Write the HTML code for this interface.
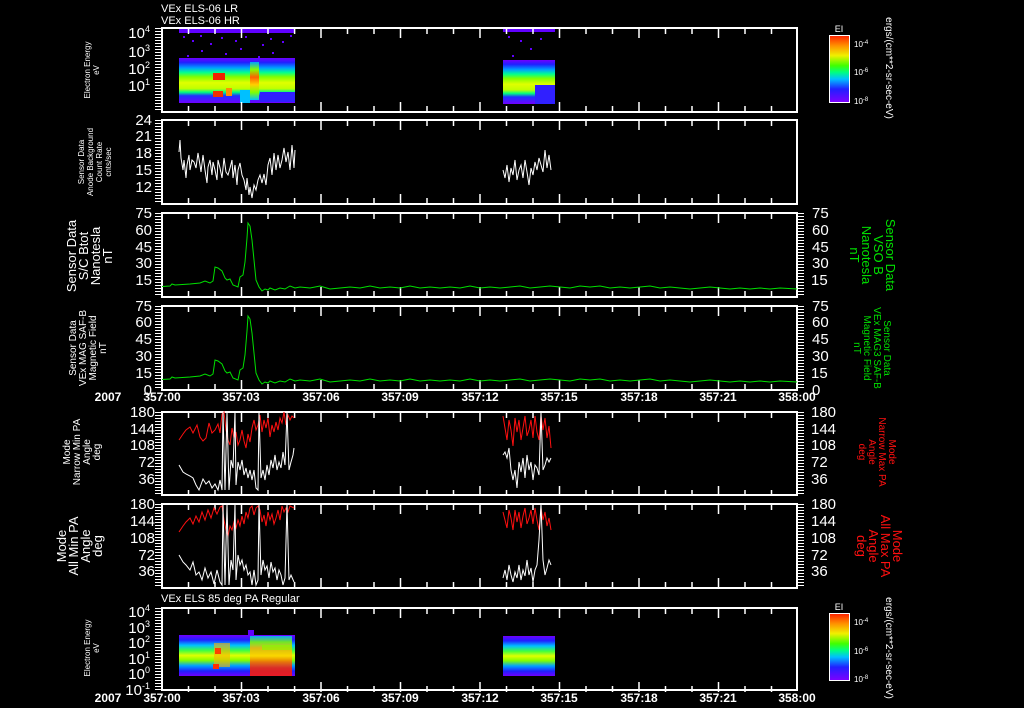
<!DOCTYPE html>
<html><head><meta charset="utf-8"><style>
html,body{margin:0;padding:0;background:#000;width:1024px;height:708px;overflow:hidden}
svg{display:block}
text{font-family:"Liberation Sans",sans-serif;fill:#fff}
</style></head><body>
<svg width="1024" height="708" viewBox="0 0 1024 708" xmlns="http://www.w3.org/2000/svg">
<defs>
<linearGradient id="cb" x1="0" y1="0" x2="0" y2="1">
<stop offset="0" stop-color="#ff2000"/><stop offset="0.15" stop-color="#ff9000"/><stop offset="0.3" stop-color="#f0f000"/><stop offset="0.45" stop-color="#40ff00"/><stop offset="0.55" stop-color="#00ff80"/><stop offset="0.65" stop-color="#00c0ff"/><stop offset="0.8" stop-color="#2020ff"/><stop offset="1" stop-color="#8000ff"/>
</linearGradient>
<linearGradient id="s1" x1="0" y1="0" x2="0" y2="1">
<stop offset="0" stop-color="#7000ff"/><stop offset="0.1" stop-color="#2020ff"/><stop offset="0.22" stop-color="#00a0ff"/><stop offset="0.32" stop-color="#00ff90"/><stop offset="0.42" stop-color="#80ff00"/><stop offset="0.55" stop-color="#e0ff00"/><stop offset="0.68" stop-color="#c0ff00"/><stop offset="0.76" stop-color="#00ff80"/><stop offset="0.84" stop-color="#2030ff"/><stop offset="1" stop-color="#7000ff"/>
</linearGradient>
<linearGradient id="s7" x1="0" y1="0" x2="0" y2="1">
<stop offset="0" stop-color="#7000ff"/><stop offset="0.12" stop-color="#2020ff"/><stop offset="0.25" stop-color="#00c0ff"/><stop offset="0.38" stop-color="#40ff40"/><stop offset="0.5" stop-color="#e0ff00"/><stop offset="0.62" stop-color="#80ff00"/><stop offset="0.75" stop-color="#00a0ff"/><stop offset="0.88" stop-color="#2020ff"/><stop offset="1" stop-color="#7000ff"/>
</linearGradient>
<linearGradient id="s7b" x1="0" y1="0" x2="0" y2="1">
<stop offset="0" stop-color="#00c0ff"/><stop offset="0.15" stop-color="#80ff00"/><stop offset="0.3" stop-color="#ffb000"/><stop offset="0.5" stop-color="#ffd000"/><stop offset="0.65" stop-color="#ff6000"/><stop offset="0.8" stop-color="#ff2000"/><stop offset="1" stop-color="#ff2000"/>
</linearGradient>
<linearGradient id="sp" x1="0" y1="0" x2="0" y2="1">
<stop offset="0" stop-color="#00a0ff"/><stop offset="0.2" stop-color="#80ff00"/><stop offset="0.4" stop-color="#ff6000"/><stop offset="0.6" stop-color="#ffd000"/><stop offset="0.8" stop-color="#80ff00"/><stop offset="1" stop-color="#00c0ff"/>
</linearGradient>
</defs>

<text x="161" y="12" font-size="11">VEx ELS-06 LR</text>
<text x="161" y="24" font-size="11">VEx ELS-06 HR</text>
<text x="161" y="602" font-size="11">VEx ELS 85 deg PA Regular</text>

<!-- spectrogram panel 1 -->
<rect x="179" y="29" width="116" height="4" fill="#6000ff"/>
<g fill="#6000ff">
<rect x="183" y="36" width="2" height="2"/><rect x="192" y="40" width="2" height="2"/><rect x="200" y="35" width="2" height="2"/><rect x="210" y="43" width="2" height="2"/><rect x="221" y="37" width="2" height="2"/><rect x="235" y="40" width="2" height="2"/><rect x="245" y="36" width="2" height="2"/><rect x="262" y="44" width="2" height="2"/><rect x="270" y="38" width="2" height="2"/><rect x="282" y="41" width="2" height="2"/><rect x="290" y="35" width="2" height="2"/><rect x="201" y="50" width="2" height="2"/><rect x="240" y="48" width="2" height="2"/><rect x="272" y="52" width="2" height="2"/><rect x="187" y="55" width="2" height="2"/><rect x="225" y="53" width="2" height="2"/><rect x="258" y="56" width="2" height="2"/>
<rect x="503" y="29" width="52" height="3"/><rect x="508" y="36" width="2" height="2"/><rect x="520" y="40" width="2" height="2"/><rect x="530" y="48" width="2" height="2"/><rect x="512" y="55" width="2" height="2"/><rect x="540" y="38" width="2" height="2"/>
</g>
<rect x="179" y="58" width="116" height="45" fill="url(#s1)"/>
<rect x="213" y="73" width="12" height="7" fill="#f02000"/>
<rect x="213" y="91" width="10" height="6" fill="#f03000"/>
<rect x="226" y="88" width="6" height="8" fill="#ff9000"/>
<rect x="250" y="62" width="9" height="38" fill="url(#sp)"/>
<rect x="240" y="90" width="10" height="13" fill="#00c0ff"/>
<rect x="260" y="92" width="35" height="10" fill="#3020ff"/>
<rect x="503" y="60" width="52" height="44" fill="url(#s1)"/>
<rect x="535" y="85" width="20" height="19" fill="#3020ff"/>

<!-- spectrogram panel 7 -->
<rect x="179" y="635" width="116" height="41" fill="url(#s7)"/>
<rect x="214" y="643" width="16" height="24" fill="#ffb000" opacity="0.6"/>
<rect x="215" y="648" width="6" height="6" fill="#ff4000"/>
<rect x="213" y="664" width="6" height="5" fill="#ff3000"/>
<rect x="250" y="636" width="42" height="40" fill="url(#s7b)" opacity="0.85"/>
<rect x="262" y="645" width="30" height="5" fill="#80ff00" opacity="0.6"/>
<rect x="248" y="630" width="6" height="5" fill="#6000ff"/>
<rect x="503" y="636" width="52" height="40" fill="url(#s7)"/>

<g fill="none" stroke="#fff" stroke-width="2">
<rect x="162" y="28" width="635" height="84"/>
<rect x="162" y="120" width="635" height="84"/>
<rect x="162" y="213" width="635" height="84"/>
<rect x="162" y="306" width="635" height="84"/>
<rect x="162" y="412" width="635" height="83"/>
<rect x="162" y="504" width="635" height="84"/>
<rect x="162" y="608" width="635" height="82"/>
</g>

<g stroke="#fff" stroke-width="6" stroke-dasharray="1 2">
<line x1="158" y1="28" x2="158" y2="112"/>
<line x1="158" y1="120" x2="158" y2="204"/>
<line x1="158" y1="213" x2="158" y2="297"/>
<line x1="158" y1="306" x2="158" y2="390"/>
<line x1="158" y1="412" x2="158" y2="495"/>
<line x1="158" y1="504" x2="158" y2="588"/>
<line x1="158" y1="608" x2="158" y2="690"/>
<line x1="801" y1="213" x2="801" y2="297"/>
<line x1="801" y1="306" x2="801" y2="390"/>
<line x1="801" y1="412" x2="801" y2="495"/>
<line x1="801" y1="504" x2="801" y2="588"/>
</g>

<g stroke="#fff" stroke-width="1.5" id="tk">
<path d="M188.5 28v6M215 28v6M241.5 28v10M268 28v6M294.6 28v6M321 28v10M347.5 28v6M374 28v6M400.5 28v10M427 28v6M453.5 28v6M480 28v10M506.5 28v6M533 28v6M559.5 28v10M586 28v6M612.5 28v6M639 28v10M665.5 28v6M692 28v6M718.5 28v10M745 28v6M771.5 28v6
M188.5 112v-6M215 112v-6M241.5 112v-10M268 112v-6M294.6 112v-6M321 112v-10M347.5 112v-6M374 112v-6M400.5 112v-10M427 112v-6M453.5 112v-6M480 112v-10M506.5 112v-6M533 112v-6M559.5 112v-10M586 112v-6M612.5 112v-6M639 112v-10M665.5 112v-6M692 112v-6M718.5 112v-10M745 112v-6M771.5 112v-6"/>
</g>
<use href="#tk" y="92"/><use href="#tk" y="185"/><use href="#tk" y="278"/><use href="#tk" y="384"/><use href="#tk" y="476"/><use href="#tk" y="580"/>

<g font-size="15" text-anchor="end">
<text x="150" y="38">10<tspan font-size="9" dy="-6">4</tspan></text>
<text x="150" y="57">10<tspan font-size="9" dy="-6">3</tspan></text>
<text x="150" y="74">10<tspan font-size="9" dy="-6">2</tspan></text>
<text x="150" y="91">10<tspan font-size="9" dy="-6">1</tspan></text>
<text x="152" y="125">24</text><text x="152" y="141">21</text><text x="152" y="158">18</text><text x="152" y="175">15</text><text x="152" y="192">12</text>
<text x="152" y="218">75</text><text x="152" y="235">60</text><text x="152" y="252">45</text><text x="152" y="268">30</text><text x="152" y="285">15</text>
<text x="152" y="311">75</text><text x="152" y="327">60</text><text x="152" y="344">45</text><text x="152" y="361">30</text><text x="152" y="378">15</text><text x="152" y="395">0</text>
<text x="155" y="417">180</text><text x="155" y="434">144</text><text x="155" y="450">108</text><text x="155" y="467">72</text><text x="155" y="484">36</text>
<text x="155" y="509">180</text><text x="155" y="526">144</text><text x="155" y="543">108</text><text x="155" y="560">72</text><text x="155" y="576">36</text>
<text x="150" y="617">10<tspan font-size="9" dy="-6">4</tspan></text>
<text x="150" y="633">10<tspan font-size="9" dy="-6">3</tspan></text>
<text x="150" y="648">10<tspan font-size="9" dy="-6">2</tspan></text>
<text x="150" y="664">10<tspan font-size="9" dy="-6">1</tspan></text>
<text x="150" y="679">10<tspan font-size="9" dy="-6">0</tspan></text>
<text x="150" y="695">10<tspan font-size="9" dy="-6">-1</tspan></text>
</g>
<g font-size="15">
<text x="812" y="218">75</text><text x="812" y="235">60</text><text x="812" y="252">45</text><text x="812" y="268">30</text><text x="811" y="285">15</text>
<text x="812" y="311">75</text><text x="812" y="327">60</text><text x="812" y="344">45</text><text x="812" y="361">30</text><text x="811" y="378">15</text><text x="812" y="395">0</text>
<text x="811" y="417">180</text><text x="811" y="434">144</text><text x="811" y="450">108</text><text x="811" y="467">72</text><text x="811" y="484">36</text>
<text x="811" y="509">180</text><text x="811" y="526">144</text><text x="811" y="543">108</text><text x="811" y="560">72</text><text x="811" y="576">36</text>
</g>

<g font-size="12" text-anchor="middle" font-weight="bold">
<text x="108" y="401">2007</text><text x="162" y="401">357:00</text><text x="241" y="401">357:03</text><text x="321" y="401">357:06</text><text x="400" y="401">357:09</text><text x="480" y="401">357:12</text><text x="559" y="401">357:15</text><text x="639" y="401">357:18</text><text x="718" y="401">357:21</text><text x="797" y="401">358:00</text>
<text x="108" y="702">2007</text><text x="162" y="702">357:00</text><text x="241" y="702">357:03</text><text x="321" y="702">357:06</text><text x="400" y="702">357:09</text><text x="480" y="702">357:12</text><text x="559" y="702">357:15</text><text x="639" y="702">357:18</text><text x="718" y="702">357:21</text><text x="797" y="702">358:00</text>
</g>

<g font-size="8" text-anchor="middle">
<text transform="translate(90,70) rotate(-90)"><tspan x="0">Electron Energy</tspan><tspan x="0" dy="9">eV</tspan></text>
<text transform="translate(84,162) rotate(-90)"><tspan x="0">Sensor Data</tspan><tspan x="0" dy="9">Anode Background</tspan><tspan x="0" dy="9">Count Rate</tspan><tspan x="0" dy="9">cnts/sec</tspan></text>
<text transform="translate(76,256) rotate(-90)" font-size="13"><tspan x="0">Sensor Data</tspan><tspan x="0" dy="12">S/C Btot</tspan><tspan x="0" dy="12">Nanotesla</tspan><tspan x="0" dy="12">nT</tspan></text>
<text transform="translate(76,348) rotate(-90)" font-size="10"><tspan x="0">Sensor Data</tspan><tspan x="0" dy="10">VEx MAG SAF-B</tspan><tspan x="0" dy="10">Magnetic Field</tspan><tspan x="0" dy="10">nT</tspan></text>
<text transform="translate(70,452) rotate(-90)" font-size="10"><tspan x="0">Mode</tspan><tspan x="0" dy="10">Narrow Min PA</tspan><tspan x="0" dy="10">Angle</tspan><tspan x="0" dy="10">deg</tspan></text>
<text transform="translate(66,546) rotate(-90)" font-size="13"><tspan x="0">Mode</tspan><tspan x="0" dy="12">All Min PA</tspan><tspan x="0" dy="12">Angle</tspan><tspan x="0" dy="12">deg</tspan></text>
<text transform="translate(90,648) rotate(-90)"><tspan x="0">Electron Energy</tspan><tspan x="0" dy="9">eV</tspan></text>
</g>

<g text-anchor="middle">
<text transform="translate(886,255) rotate(90)" font-size="13" style="fill:#00e000"><tspan x="0">Sensor Data</tspan><tspan x="0" dy="12">VSO B</tspan><tspan x="0" dy="12">Nanotesla</tspan><tspan x="0" dy="12">nT</tspan></text>
<text transform="translate(884,348) rotate(90)" font-size="10" style="fill:#00e000"><tspan x="0">Sensor Data</tspan><tspan x="0" dy="10">VEx MAG3 SAF-B</tspan><tspan x="0" dy="10">Magnetic Field</tspan><tspan x="0" dy="10">nT</tspan></text>
<text transform="translate(889,452) rotate(90)" font-size="10" style="fill:#ff1010"><tspan x="0">Mode</tspan><tspan x="0" dy="10">Narrow Max PA</tspan><tspan x="0" dy="10">Angle</tspan><tspan x="0" dy="10">deg</tspan></text>
<text transform="translate(893,546) rotate(90)" font-size="13" style="fill:#ff1010"><tspan x="0">Mode</tspan><tspan x="0" dy="12">All Max PA</tspan><tspan x="0" dy="12">Angle</tspan><tspan x="0" dy="12">deg</tspan></text>
<text transform="translate(886,68) rotate(90)" font-size="10">ergs/(cm**2-sr-sec-eV)</text>
<text transform="translate(886,648) rotate(90)" font-size="10">ergs/(cm**2-sr-sec-eV)</text>
</g>

<text x="839" y="32" font-size="9" text-anchor="middle">EI</text>
<rect x="829.5" y="35.5" width="20" height="67" fill="url(#cb)" stroke="#fff"/>
<g font-size="8"><text x="854" y="47">10<tspan font-size="6" dy="-3">-4</tspan></text><text x="854" y="75">10<tspan font-size="6" dy="-3">-6</tspan></text><text x="854" y="104">10<tspan font-size="6" dy="-3">-8</tspan></text></g>
<text x="839" y="610" font-size="9" text-anchor="middle">EI</text>
<rect x="829.5" y="613.5" width="20" height="67" fill="url(#cb)" stroke="#fff"/>
<g font-size="8"><text x="854" y="625">10<tspan font-size="6" dy="-3">-4</tspan></text><text x="854" y="654">10<tspan font-size="6" dy="-3">-6</tspan></text><text x="854" y="682">10<tspan font-size="6" dy="-3">-8</tspan></text></g>

<g fill="none" stroke="#fff" stroke-width="1">
<polyline points="179,152 180,140 181,158 183,170 184,160 186,178 187,165 189,155 190,170 192,160 194,162 196,168 198,153 200,165 201,172 203,155 205,170 207,183 208,167 210,160 212,175 213,162 215,170 217,180 218,160 220,168 222,178 224,158 226,172 228,175 230,168 232,160 233,178 235,165 237,185 238,170 240,163 242,175 244,180 246,190 247,178 249,195 250,187 252,198 254,185 256,190 258,180 260,175 262,183 264,174 266,185 268,165 270,158 272,175 274,153 276,170 278,155 280,168 282,160 284,148 286,162 288,152 290,170 292,145 294,168 295,150"/>
<polyline points="503,170 505,178 507,165 509,182 511,168 513,175 515,160 517,180 519,170 521,165 523,178 525,160 527,172 529,185 531,168 533,175 535,162 537,170 539,158 541,165 543,172 545,150 547,168 549,155 551,170"/>
</g>

<g fill="none" stroke="#00e000" stroke-width="1" id="mag">
<polyline points="162,286.5 170,286 172,284 175,285 190,284 200,283 205,281 210,283 213,281 215,267 218,268 222,271 225,278 227,280 230,279 233,285 238,287 240,277 243,275 245,262 247,238 248,223 250,226 252,240 254,260 256,280 259,287 262,291 265,289 268,290 270,288 275,290 280,288 285,289 290,286 295,288 300,287 310,288 320,286 330,289 340,288 350,287 360,288 370,286 380,288 390,287 400,288 410,286 420,288 430,287 440,288 450,287 460,288 470,286 480,288 490,287 500,288 510,287 520,286 530,288 540,287 550,286 560,287 570,288 580,286 590,287 600,286 610,288 620,287 630,288 640,287 650,286 660,288 670,287 680,288 690,289 700,288 710,287 720,288 730,289 740,288 750,289 760,288 770,289 780,288 797,289"/>
</g>
<use href="#mag" y="93"/>

<g fill="none" stroke-width="1">
<polyline stroke="#ff1010" points="179,440 183,434 186,430 190,427 193,433 197,425 200,437 203,441 206,438 209,423 212,433 215,430 218,424 220,433 222,414 224,412 226,430 228,440 230,445 232,428 234,438 236,432 238,445 240,440 242,430 244,441 246,448 248,434 250,442 252,428 254,420 256,430 258,425 260,415 262,432 264,420 266,428 268,418 270,437 272,425 274,432 276,422 278,430 280,418 282,423 284,412 286,425 288,415 290,420 292,416 294,418"/>
<polyline stroke="#fff" points="179,465 183,472 186,474 190,476 193,478 196,485 199,490 203,479 206,484 209,481 212,488 215,484 218,490 220,480 222,490 223,412 225,490 227,412 229,490 231,460 233,468 235,412 236,485 238,462 240,470 242,460 244,475 246,468 248,478 250,470 252,480 254,470 256,488 258,490 259,412 261,478 263,470 265,480 267,465 269,475 271,460 273,468 275,455 277,470 279,462 281,468 283,452 285,465 287,412 289,470 291,462 293,455 294,448"/>
<polyline stroke="#ff1010" points="503,416 505,428 507,440 509,420 511,430 513,446 515,418 517,432 519,420 521,440 523,428 525,416 527,436 529,430 531,420 533,438 535,416 537,432 539,440 541,416 543,430 545,418 547,438 549,426 551,448"/>
<polyline stroke="#fff" points="503,455 505,452 507,458 509,448 511,470 513,480 515,470 517,488 519,462 521,472 523,458 525,478 527,455 529,470 531,462 533,480 535,465 537,468 539,475 541,412 543,470 545,465 547,458 549,462 551,458"/>
</g>

<g fill="none" stroke-width="1">
<polyline stroke="#ff1010" points="179,532 183,526 186,522 190,518 193,524 196,516 199,522 202,512 205,520 208,510 211,518 214,508 217,514 220,507 222,506 224,520 226,530 228,536 230,526 232,530 234,522 236,528 238,520 240,526 242,516 244,524 246,512 248,518 250,508 252,506 254,515 256,508 258,506 260,510 262,522 264,515 266,526 268,512 270,520 272,514 274,524 276,518 278,510 280,520 282,506 284,512 286,508 288,512 290,506 294,508"/>
<polyline stroke="#fff" points="179,555 183,562 186,565 190,570 193,562 196,575 199,572 202,580 205,568 208,578 211,572 214,584 217,570 220,582 222,585 223,504 225,585 227,504 229,585 231,560 233,570 235,504 236,580 238,555 240,565 242,560 244,570 246,565 248,575 250,572 252,585 254,570 256,585 258,580 259,504 261,575 263,560 265,570 267,566 269,578 271,562 273,572 275,568 277,580 279,570 281,575 283,585 285,578 287,504 289,580 291,575 294,582"/>
<polyline stroke="#ff1010" points="503,512 505,520 507,528 509,510 511,518 513,530 515,510 517,522 519,512 521,528 523,516 525,508 527,524 529,518 531,510 533,524 535,508 537,520 539,530 541,508 543,520 545,512 547,526 549,518 551,530"/>
<polyline stroke="#fff" points="503,578 505,570 507,580 509,565 511,575 513,582 515,572 517,578 519,565 521,580 523,570 525,576 527,560 529,575 531,568 533,582 535,570 537,565 539,540 541,504 543,560 545,575 547,568 549,560 551,565"/>
</g>
</svg>
</body></html>
